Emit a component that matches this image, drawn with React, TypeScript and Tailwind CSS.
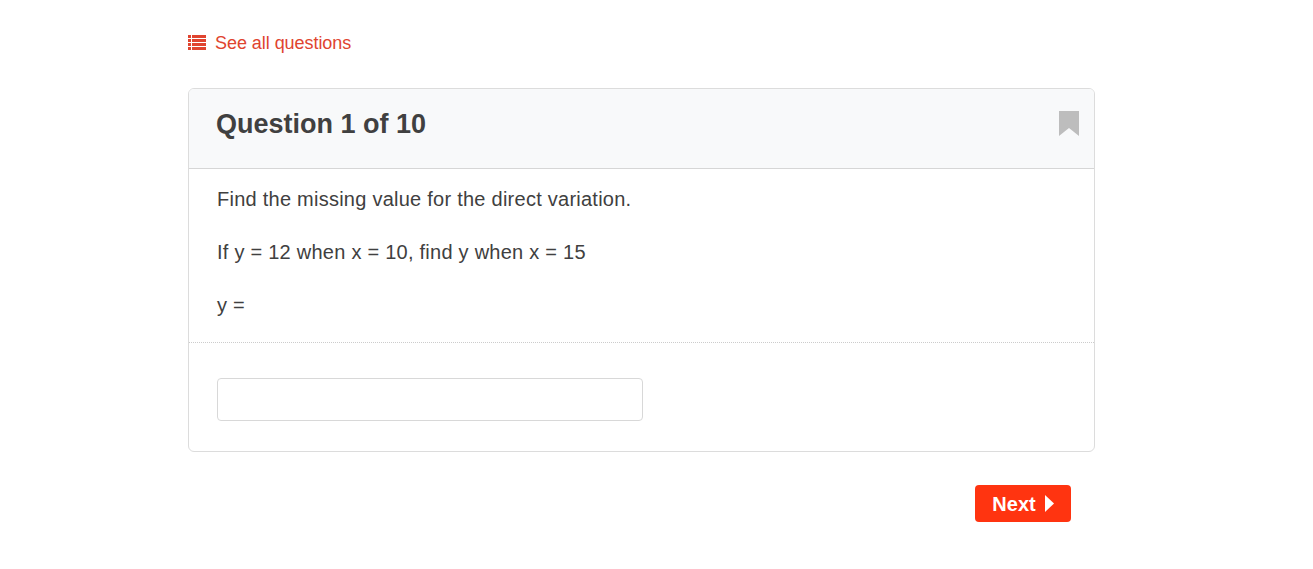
// list icon from the "See all questions" link
function ListIcon() {
  return (
    <svg width="18" height="15" viewBox="0 0 18 15" fill="currentColor" className="shrink-0">
      <rect x="0" y="0" width="3" height="3" />
      <rect x="4" y="0" width="14" height="3" />
      <rect x="0" y="4" width="3" height="3" />
      <rect x="4" y="4" width="14" height="3" />
      <rect x="0" y="8" width="3" height="3" />
      <rect x="4" y="8" width="14" height="3" />
      <rect x="0" y="12" width="3" height="3" />
      <rect x="4" y="12" width="14" height="3" />
    </svg>
  );
}

function BookmarkIcon() {
  return (
    <svg width="20" height="25" viewBox="0 0 20 25" fill="#bdbdbd" className="shrink-0">
      <path d="M0 0H20V25L10 17L0 25Z" />
    </svg>
  );
}

function CaretIcon() {
  return (
    <svg width="9" height="17" viewBox="0 0 9 17" fill="currentColor" className="shrink-0">
      <path d="M0 0L9 8.5L0 17Z" />
    </svg>
  );
}

export default function App() {
  return (
    <div className="min-h-[569px] bg-white font-['Liberation_Sans',Arial,sans-serif] text-[#404040]">
      <div className="ml-[188px] w-[907px] pt-[31px]">
        {/* Back link */}
        <a className="flex h-[23px] items-center gap-[9px] text-[18px] leading-[23px] text-[#e0442f]">
          <ListIcon />
          <span className="relative top-[1px] tracking-[-0.05px]">See all questions</span>
        </a>

        {/* Question card */}
        <div className="mt-[34px] overflow-hidden rounded-[6px] border border-[#dcdcdc]">
          <div className="flex h-[80px] items-center justify-between border-b border-[#d6d6d6] bg-[#f8f9fa] pb-[10px] pl-[27px] pr-[15px]">
            <h1 className="text-[27px] font-bold leading-[32px]">Question 1 of 10</h1>
            <BookmarkIcon />
          </div>

          <div className="border-b border-dotted border-[#cccccc] px-[28px] pb-[24px] pt-[17px] text-[20px] leading-[26px] tracking-[0.25px]">
            <p>Find the missing value for the direct variation.</p>
            <p className="mt-[27px]">If y = 12 when x = 10, find y when x = 15</p>
            <p className="mt-[27px]">y =</p>
          </div>

          <div className="px-[28px] pb-[30px] pt-[35px]">
            <input
              type="text"
              className="block h-[43px] w-[426px] rounded-[4px] border border-[#d8d8d8] bg-white"
            />
          </div>
        </div>

        {/* Next */}
        <div className="mr-[24px] mt-[33px] flex justify-end">
          <button className="flex h-[37px] w-[96px] items-center justify-center gap-[9px] rounded-[4px] bg-[#ff3410] text-[20px] font-bold text-white">
            Next
            <CaretIcon />
          </button>
        </div>
      </div>
    </div>
  );
}
